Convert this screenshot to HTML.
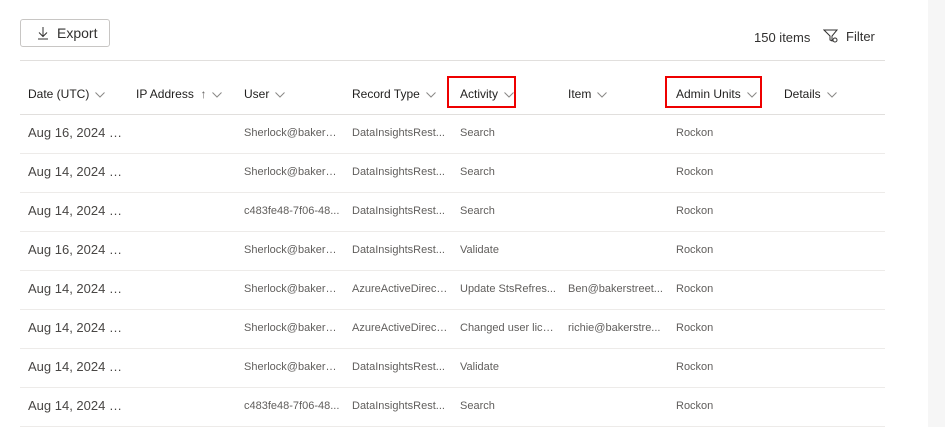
<!DOCTYPE html>
<html><head><style>
body{margin:0;width:945px;height:427px;overflow:hidden;background:#fff;font-family:"Liberation Sans",sans-serif;position:relative}
.a{position:absolute;white-space:nowrap}
.btn{left:20px;top:19px;width:90px;height:28px;border:1px solid #c8c6c4;border-radius:3px;box-sizing:border-box}
.hl{position:absolute;left:20px;width:865px;height:1px;background:#e1dfdd}
.h{font-size:12px;color:#201f1e;top:87px}
.h svg{vertical-align:middle;margin-left:6px}
.c{font-size:11px;color:#605e5c;overflow:hidden;text-overflow:ellipsis;width:96px}
.d{font-size:13px;color:#484644;width:96px;overflow:hidden;text-overflow:ellipsis}
.red{position:absolute;border:2px solid #e00;box-sizing:border-box}
.sb{position:absolute;left:928px;top:0;width:17px;height:427px;background:#f6f6f6}
</style></head><body>
<div class="a btn"></div>
<svg class="a" style="left:36px;top:26px" width="14" height="14" viewBox="0 0 14 14"><path d="M7 1v9M3 6.5l4 4 4-4M2 13h10" stroke="#323130" fill="none" stroke-width="1"/></svg>
<div class="a" style="left:57px;top:25px;font-size:14px;color:#323130">Export</div>
<div class="a" style="left:754px;top:30px;font-size:13px;color:#323130">150 items</div>
<svg class="a" style="left:823px;top:28px" width="16" height="16" viewBox="0 0 16 16"><path d="M1 2h13l-5 6v5l-2-1V8z" stroke="#323130" fill="none"/><circle cx="12" cy="12" r="2" stroke="#323130" fill="none"/></svg>
<div class="a" style="left:846px;top:29px;font-size:13px;color:#323130">Filter</div>
<div class="hl" style="top:60px"></div>
<div class="hl" style="top:114px"></div>
<div class="red" style="left:447px;top:76px;width:69px;height:32px"></div>
<div class="red" style="left:665px;top:76px;width:97px;height:32px"></div>
<div class="sb"></div>
<div id="t"></div>
<script>
var chev='<svg width="10" height="6" viewBox="0 0 10 6"><path d="M.5.5L5 5 9.5.5" stroke="#8a8886" fill="none"/></svg>';
var hs=[["Date (UTC)",28],["IP Address",136],["User",244],["Record Type",352],["Activity",460],["Item",568],["Admin Units",676],["Details",784]];
var o='';
hs.forEach(function(h){o+='<div class="a h" style="left:'+h[1]+'px">'+h[0]+(h[0]=="IP Address"?' &nbsp;<span style="color:#605e5c">&#8593;</span>':'')+chev+'</div>';});
var rows=[["Aug 16, 2024 8...","Sherlock@bakerst...","DataInsightsRest...","Search",""],
["Aug 14, 2024 1...","Sherlock@bakerst...","DataInsightsRest...","Search",""],
["Aug 14, 2024 1...","c483fe48-7f06-48...","DataInsightsRest...","Search",""],
["Aug 16, 2024 8...","Sherlock@bakerst...","DataInsightsRest...","Validate",""],
["Aug 14, 2024 8...","Sherlock@bakerst...","AzureActiveDirect...","Update StsRefres...","Ben@bakerstreet..."],
["Aug 14, 2024 8...","Sherlock@bakerst...","AzureActiveDirect...","Changed user lice...","richie@bakerstre..."],
["Aug 14, 2024 1...","Sherlock@bakerst...","DataInsightsRest...","Validate",""],
["Aug 14, 2024 1...","c483fe48-7f06-48...","DataInsightsRest...","Search",""]];
rows.forEach(function(r,i){var y=114+39*i;
o+='<div class="a d" style="left:28px;top:'+(y+11)+'px">'+r[0]+'</div>';
[[r[1],244],[r[2],352],[r[3],460],[r[4],568],["Rockon",676]].forEach(function(c){o+='<div class="a c" style="left:'+c[1]+'px;top:'+(y+13)+'px">'+c[0]+'</div>';});
o+='<div class="hl" style="top:'+(y+39)+'px;background:#edebe9"></div>';});
document.getElementById('t').innerHTML=o;
</script>
</body></html>
